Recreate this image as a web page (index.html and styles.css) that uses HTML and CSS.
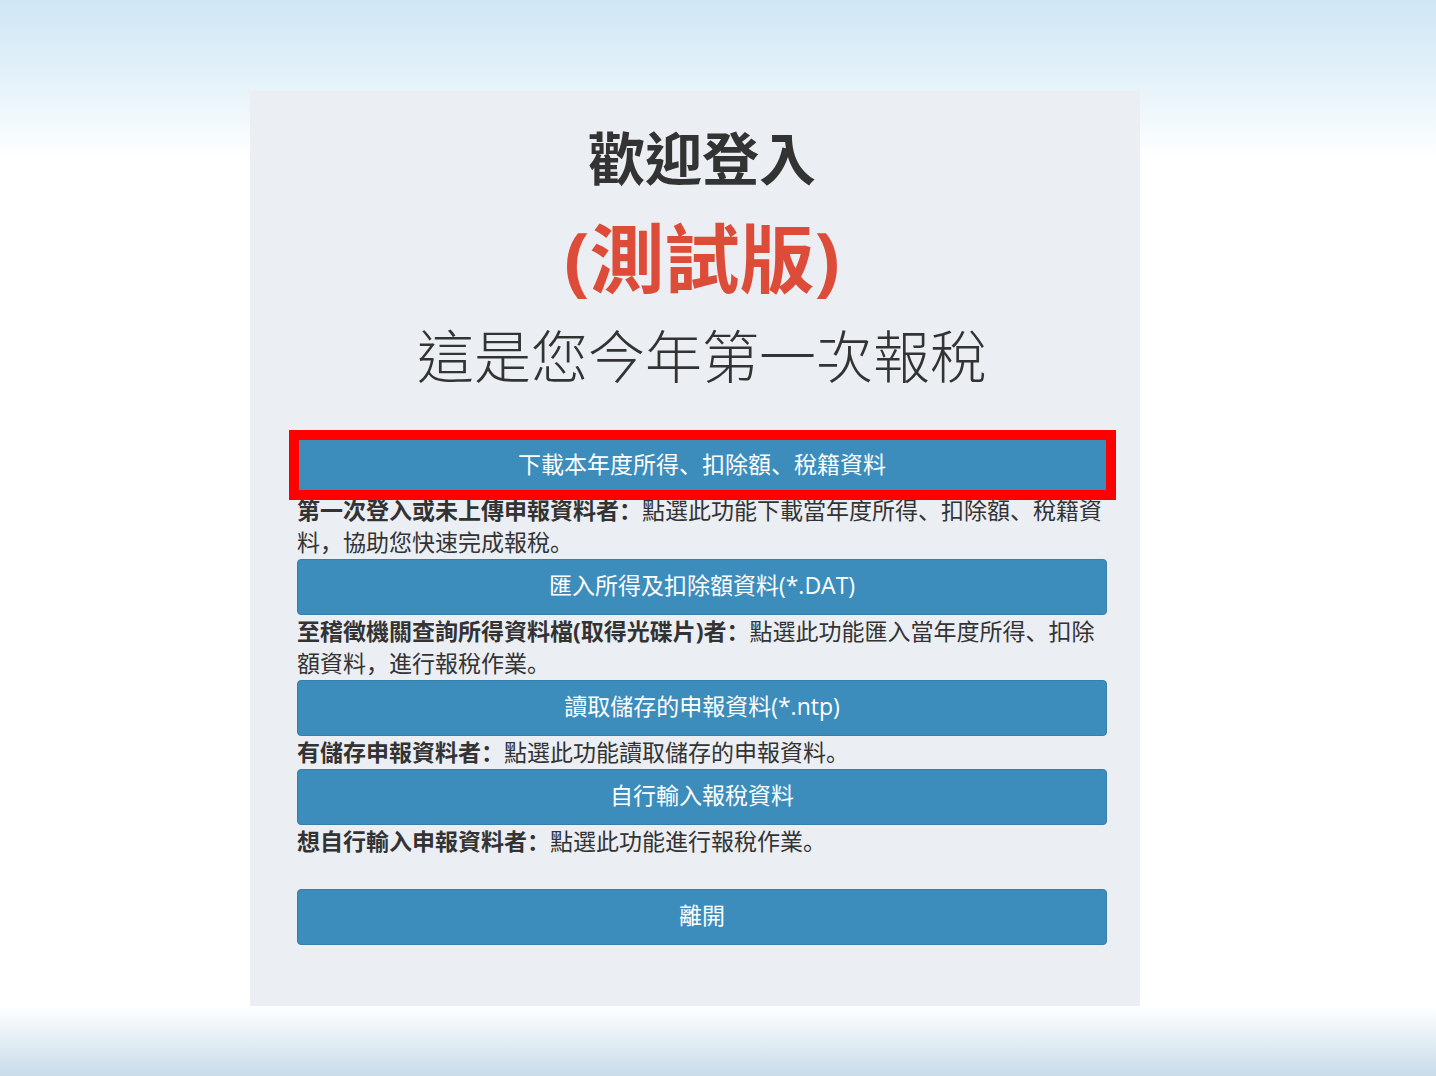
FILE: index.html
```html
<!DOCTYPE html>
<html lang="zh-Hant">
<head>
  <meta charset="utf-8">
  <meta name="viewport" content="width=device-width, initial-scale=1">
  <title>歡迎登入</title>
  <link rel="stylesheet" href="styles.css">
</head>
<body>
  <main class="panel">
    <header class="welcome">
      <h1 class="title">歡迎登入</h1>
      <p class="edition">(測試版)</p>
      <p class="status">這是您今年第一次報稅</p>
    </header>
    <div class="option option-highlighted">
      <button class="action" type="button" aria-describedby="download-note">下載本年度所得、扣除額、稅籍資料</button>
      <p class="note" id="download-note"><strong>第一次登入或未上傳申報資料者：</strong>點選此功能下載當年度所得、扣除額、稅籍資料，協助您快速完成報稅。</p>
    </div>
    <div class="option">
      <button class="action" type="button" aria-describedby="import-note">匯入所得及扣除額資料(*.DAT)</button>
      <p class="note" id="import-note"><strong>至稽徵機關查詢所得資料檔(取得光碟片)者：</strong>點選此功能匯入當年度所得、扣除額資料，進行報稅作業。</p>
    </div>
    <div class="option">
      <button class="action" type="button" aria-describedby="load-note">讀取儲存的申報資料(*.ntp)</button>
      <p class="note" id="load-note"><strong>有儲存申報資料者：</strong>點選此功能讀取儲存的申報資料。</p>
    </div>
    <div class="option">
      <button class="action" type="button" aria-describedby="manual-note">自行輸入報稅資料</button>
      <p class="note" id="manual-note"><strong>想自行輸入申報資料者：</strong>點選此功能進行報稅作業。</p>
    </div>
    <div class="leave">
      <button class="action" type="button">離開</button>
    </div>
  </main>
</body>
</html>
```
FILE: styles.css
```css
*,
*::before {
  box-sizing: border-box;
}

body {
  margin: 0;
  min-height: 100vh;
  padding: 91px 0 70px;
  display: grid;
  grid-template-columns: 250fr 890fr 296fr;
  align-items: start;
  color: #333;
  background:
    linear-gradient(#cfe6f4, #e4f2f9 80px, #fff 160px) top / 100% 160px no-repeat,
    linear-gradient(#fff, #c8dbe9) bottom / 100% 70px no-repeat,
    #fff;
  font-family: "Open Sans", "Noto Sans CJK SC", sans-serif;
  font-size: 23px;
  line-height: 32px;
}

h1,
p {
  margin: 0;
}

.panel {
  grid-column: 2;
  padding: 27px 33px 61px 47px;
  background: #ebeef3;
}

.welcome {
  padding-bottom: 42px;
  text-align: center;
  font-family: "Open Sans", "Noto Sans CJK TC", sans-serif;
  line-height: 80px;
}

.title {
  font-size: 57px;
  font-weight: 700;
}

.edition {
  margin-top: 20px;
  color: #dd4b39;
  font-size: 75px;
  font-weight: 700;
}

.status {
  margin-top: 18px;
  font-size: 57px;
  font-weight: 300;
}

/* Keeps the punctuation in the lower left of its cell */
.option {
  position: relative;
  padding-bottom: 1px;
  font-feature-settings: "locl" 0;
}

.action {
  display: block;
  width: 100%;
  min-height: 56px;
  padding: 8px 16px 12px;
  border: 1px solid #367fa9;
  border-radius: 4px;
  background: #3c8dbc;
  color: #fff;
  font: inherit;
  font-feature-settings: inherit;
  cursor: pointer;
}

/* Red frame drawn over the recommended action */
.option-highlighted::before {
  content: "";
  position: absolute;
  top: -8px;
  left: -8px;
  right: -9px;
  height: 70px;
  border: 10px solid #f00;
  pointer-events: none;
}

.note strong {
  font-weight: 700;
}

.leave {
  padding-top: 31px;
}
```
